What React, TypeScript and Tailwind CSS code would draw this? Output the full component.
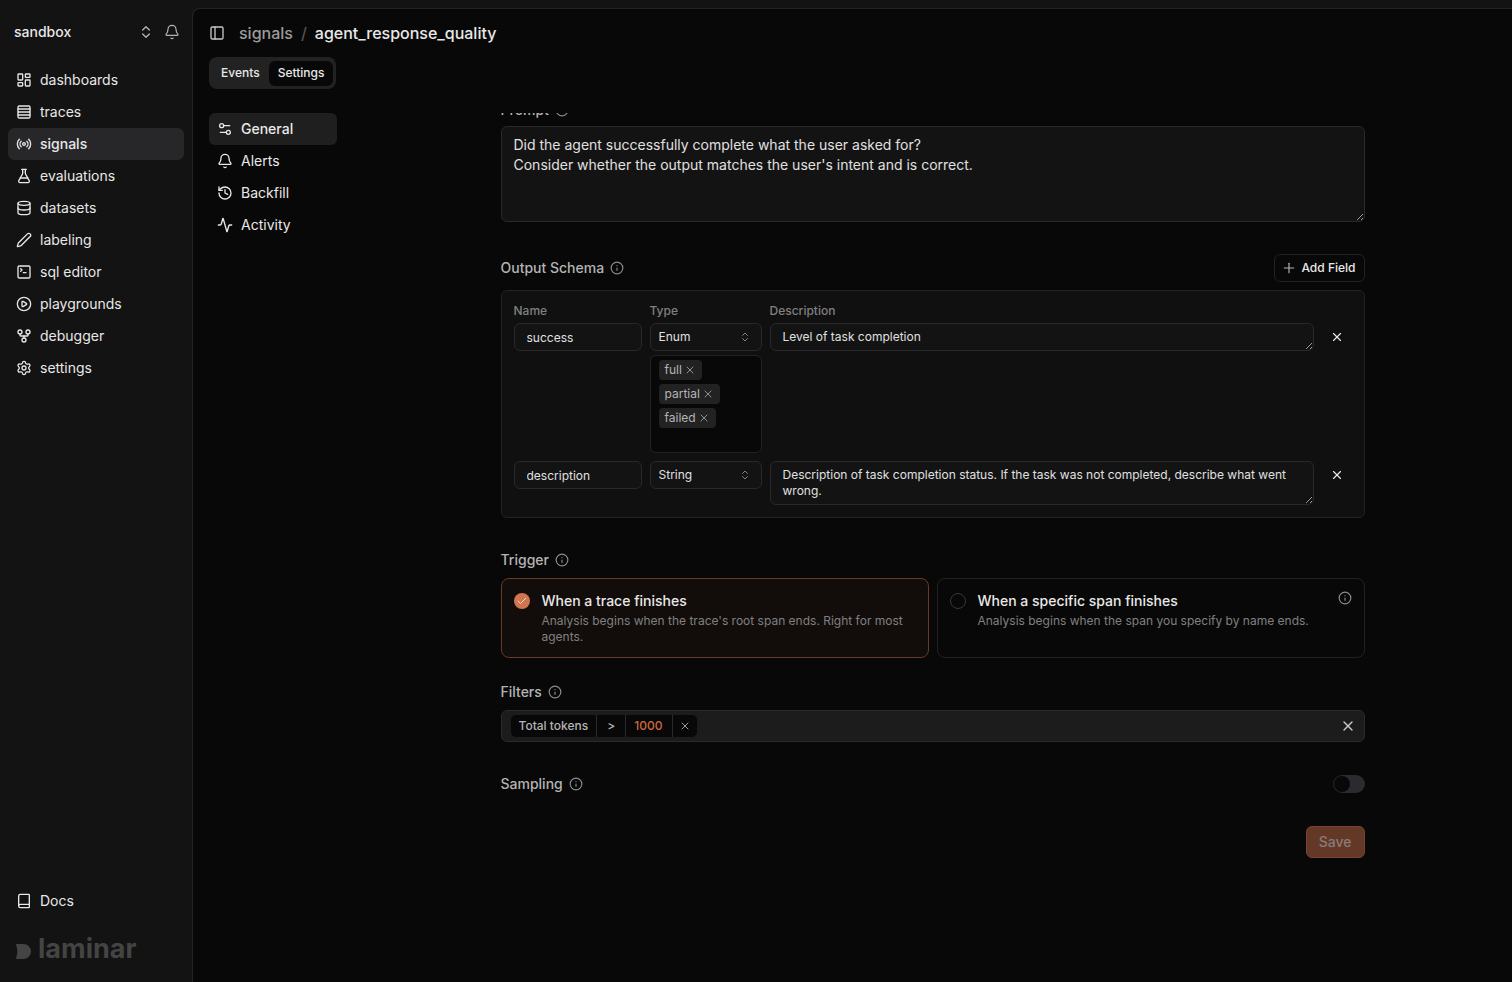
import { useState } from "react";
import {
  Activity,
  Bell,
  Book,
  Check,
  ChevronsUpDown,
  CirclePlay,
  Database,
  FlaskConical,
  GitFork,
  History,
  Info,
  LayoutDashboard,
  PanelLeft,
  Pen,
  Plus,
  Radio,
  Rows4,
  Settings,
  Settings2,
  SquareTerminal,
  X,
} from "lucide-react";
import type { LucideIcon } from "lucide-react";
import clsx from "clsx";

type NavItem = { label: string; icon: LucideIcon };

const mainNav: NavItem[] = [
  { label: "dashboards", icon: LayoutDashboard },
  { label: "traces", icon: Rows4 },
  { label: "signals", icon: Radio },
  { label: "evaluations", icon: FlaskConical },
  { label: "datasets", icon: Database },
  { label: "labeling", icon: Pen },
  { label: "sql editor", icon: SquareTerminal },
  { label: "playgrounds", icon: CirclePlay },
  { label: "debugger", icon: GitFork },
  { label: "settings", icon: Settings },
];

const settingsNav: NavItem[] = [
  { label: "General", icon: Settings2 },
  { label: "Alerts", icon: Bell },
  { label: "Backfill", icon: History },
  { label: "Activity", icon: Activity },
];

const triggers = [
  {
    id: "trace",
    title: "When a trace finishes",
    text: "Analysis begins when the trace's root span ends. Right for most agents.",
    info: false,
  },
  {
    id: "span",
    title: "When a specific span finishes",
    text: "Analysis begins when the span you specify by name ends.",
    info: true,
  },
];

const fieldClass =
  "rounded-md border border-[#29292c] bg-[#131313] text-xs text-[#e0e0e0] outline-none";

function Sidebar() {
  return (
    <aside className="flex w-48 shrink-0 flex-col pb-[17px]">
      <div className="flex h-16 items-center pr-3 pl-3.5">
        <button className="flex flex-1 items-center justify-between text-sm font-medium">
          sandbox
          <ChevronsUpDown className="size-4 text-[#b4b4b4]" />
        </button>
        <button aria-label="Notifications" className="ml-2.5 text-[#b4b4b4]">
          <Bell className="size-4" strokeWidth={1.75} />
        </button>
      </div>
      <nav className="flex flex-col px-2">
        {mainNav.map(({ label, icon: Icon }) => (
          <a
            key={label}
            href={`#${label}`}
            className={clsx(
              "flex h-8 items-center gap-2 rounded-md px-2 text-sm",
              label === "signals" && "bg-[#27272a] font-medium"
            )}
          >
            <Icon className="size-4" />
            {label}
          </a>
        ))}
      </nav>
      <div className="mt-auto flex flex-col px-2">
        <a href="#docs" className="flex h-8 items-center gap-2 px-2 text-sm">
          <Book className="size-4" />
          Docs
        </a>
        <div className="mt-4 flex h-8 items-center gap-[7px] px-2 text-[#444444]">
          <svg viewBox="0 0 15 15" className="mt-1 w-[15px]" fill="currentColor">
            <path d="M1.2 0H7.5a7.5 7.5 0 0 1 0 15H1.2C.4 15-.1 14.3.2 13.5c1.6-4 1.6-8 0-12C-.1.7.4 0 1.2 0Z" />
          </svg>
          <span className="text-[27px] leading-8 font-bold">laminar</span>
        </div>
      </div>
    </aside>
  );
}

function SectionLabel({ children, htmlFor }: { children: string; htmlFor?: string }) {
  return (
    <div className="flex items-center gap-1.5 text-[#b4b4b4]">
      <label htmlFor={htmlFor} className="text-sm font-medium">
        {children}
      </label>
      <Info className="size-3.5 text-[#8c8c8c]" />
    </div>
  );
}

function TypeSelect({ label, value }: { label: string; value: string }) {
  return (
    <div className="relative">
      <select
        aria-label={label}
        defaultValue={value}
        className={clsx(fieldClass, "h-7 w-full appearance-none px-2")}
      >
        <option>String</option>
        <option>Enum</option>
      </select>
      <ChevronsUpDown className="pointer-events-none absolute top-2 right-[11px] size-3 text-[#808080]" />
    </div>
  );
}

function RemoveButton({ label }: { label: string }) {
  return (
    <button aria-label={label} className="flex h-7 items-center justify-center">
      <X className="size-3.5" />
    </button>
  );
}

function OutputSchema() {
  const [tags, setTags] = useState(["full", "partial", "failed"]);

  return (
    <section className="flex flex-col gap-2">
      <div className="flex items-center justify-between">
        <SectionLabel>Output Schema</SectionLabel>
        <button className="flex h-7 items-center gap-1 rounded-md border border-[#222222] pr-2 pl-1.5 text-xs font-medium">
          <Plus className="size-4 text-[#b4b4b4]" strokeWidth={1.75} />
          Add Field
        </button>
      </div>
      <div className="grid grid-cols-[128px_112px_1fr_30px] items-start gap-x-2 rounded-md border border-[#222222] bg-[#101010] p-3">
        <span className="mb-1 text-xs font-medium text-[#808080]">Name</span>
        <span className="mb-1 text-xs font-medium text-[#808080]">Type</span>
        <span className="mb-1 text-xs font-medium text-[#808080]">Description</span>
        <span />

        <input
          aria-label="Field 1 name"
          defaultValue="success"
          className={clsx(fieldClass, "h-7 w-full px-3")}
        />
        <div className="mb-2 flex flex-col gap-1">
          <TypeSelect label="Field 1 type" value="Enum" />
          <div className="flex flex-col items-start gap-1 rounded-md border border-[#222222] bg-[#080808] px-2 py-1">
            {tags.map((tag) => (
              <span
                key={tag}
                className="flex h-5 items-center gap-0.5 rounded-sm bg-[#222222] px-1.5 text-xs text-[#b4b4b4]"
              >
                {tag}
                <button
                  aria-label={`Remove ${tag}`}
                  onClick={() => setTags(tags.filter((t) => t !== tag))}
                >
                  <X className="size-3" strokeWidth={1.5} />
                </button>
              </span>
            ))}
            <input aria-label="Add value" className="h-4 w-full text-xs outline-none" />
          </div>
        </div>
        <textarea
          aria-label="Field 1 description"
          defaultValue="Level of task completion"
          className={clsx(fieldClass, "h-7 w-full overflow-hidden px-3 py-[5px]")}
        />
        <RemoveButton label="Remove field 1" />

        <input
          aria-label="Field 2 name"
          defaultValue="description"
          className={clsx(fieldClass, "h-7 w-full px-3")}
        />
        <TypeSelect label="Field 2 type" value="String" />
        <textarea
          aria-label="Field 2 description"
          defaultValue="Description of task completion status. If the task was not completed, describe what went wrong."
          className={clsx(fieldClass, "h-11 w-full overflow-hidden px-3 py-[5px]")}
        />
        <RemoveButton label="Remove field 2" />
      </div>
    </section>
  );
}

function Trigger() {
  const [selected, setSelected] = useState("trace");

  return (
    <section className="-mb-2 flex flex-col gap-2">
      <SectionLabel>Trigger</SectionLabel>
      <div className="grid grid-cols-2 gap-2">
        {triggers.map(({ id, title, text, info }) => {
          const active = selected === id;
          return (
            <label
              key={id}
              className={clsx(
                "relative flex gap-3 rounded-lg border p-3",
                active ? "border-[#683a28] bg-[#120d0b]" : "border-[#222222]"
              )}
            >
              <input
                type="radio"
                name="trigger"
                checked={active}
                onChange={() => setSelected(id)}
                className="sr-only"
              />
              <span
                className={clsx(
                  "mt-0.5 flex size-4 shrink-0 items-center justify-center rounded-full",
                  active ? "bg-[#d0754e]" : "border border-[#38383b]"
                )}
              >
                {active && <Check className="size-3 text-white" strokeWidth={1.5} />}
              </span>
              <span className="flex flex-col gap-0.5">
                <span className="text-sm font-medium">{title}</span>
                <span className="text-xs text-[#808080]">{text}</span>
              </span>
              {info && <Info className="absolute top-3 right-3 size-3.5 text-[#8c8c8c]" />}
            </label>
          );
        })}
      </div>
    </section>
  );
}

function Filters() {
  return (
    <section className="flex flex-col gap-2">
      <SectionLabel>Filters</SectionLabel>
      <div className="flex h-8 items-center justify-between rounded-md border border-[#2a2a2d] bg-[#1c1c1c] px-2">
        <div className="flex h-6 divide-x divide-[#2a2a2d] overflow-hidden rounded-md border border-[#1c1c1c] bg-[#080808] text-xs font-medium text-[#b4b4b4]">
          <button className="px-2">Total tokens</button>
          <button className="w-[29px]">&gt;</button>
          <input
            aria-label="Total tokens value"
            defaultValue="1000"
            className="w-[47px] px-2 text-[#d0693f] outline-none"
          />
          <button aria-label="Remove filter" className="flex w-6 items-center justify-center">
            <X className="size-3" strokeWidth={1.75} />
          </button>
        </div>
        <button aria-label="Clear filters" className="text-[#c8c8c8]">
          <X className="size-4" />
        </button>
      </div>
    </section>
  );
}

function Sampling() {
  const [enabled, setEnabled] = useState(false);

  return (
    <section className="flex items-center justify-between">
      <SectionLabel htmlFor="sampling">Sampling</SectionLabel>
      <label className="flex h-[18px] w-8 items-center rounded-full bg-[#2a2a2f] p-px">
        <input
          id="sampling"
          type="checkbox"
          role="switch"
          checked={enabled}
          onChange={(e) => setEnabled(e.target.checked)}
          className="peer sr-only"
        />
        <span className="size-4 rounded-full bg-[#080808] peer-checked:ml-auto" />
      </label>
    </section>
  );
}

function App() {
  return (
    <div className="flex h-screen bg-[#131313] font-['Inter',sans-serif] text-[#e8e8e8] [color-scheme:dark]">
      <Sidebar />
      <main className="mt-2 flex min-w-0 flex-1 flex-col rounded-tl-lg border-t border-l border-[#242424] bg-[#080808]">
        <header className="flex h-12 items-center gap-3.5 px-4 font-medium">
          <button aria-label="Toggle sidebar" className="text-[#c8c8c8]">
            <PanelLeft className="size-4" />
          </button>
          <div className="flex gap-2">
            <a href="#signals" className="text-[#9c9c9c]">
              signals
            </a>
            <span className="text-[#555555]">/</span>
            <h1>agent_response_quality</h1>
          </div>
        </header>
        <div className="px-4">
          <div className="inline-flex h-8 items-center rounded-lg bg-[#222222] p-[3px] align-top text-xs font-medium">
            <button className="h-full px-[9px]">Events</button>
            <button className="h-[25px] rounded-md bg-[#080808] px-[9px]">Settings</button>
          </div>
        </div>
        <div className="flex min-h-0 flex-1 gap-4 pt-6 pl-4">
          <nav className="flex w-32 shrink-0 flex-col">
            {settingsNav.map(({ label, icon: Icon }) => (
              <a
                key={label}
                href={`#${label}`}
                className={clsx(
                  "flex h-8 items-center gap-2 rounded-md px-2 text-sm",
                  label === "General" && "bg-[#1f1f1f] font-medium"
                )}
              >
                <Icon className="size-4" />
                {label}
              </a>
            ))}
          </nav>
          <div className="min-w-0 flex-1 overflow-hidden">
            <form
              onSubmit={(e) => e.preventDefault()}
              className="mx-auto -mt-[13px] flex max-w-4xl flex-col gap-8 px-4"
            >
              <section className="flex flex-col gap-1.5">
                <SectionLabel htmlFor="prompt">Prompt</SectionLabel>
                <textarea
                  id="prompt"
                  defaultValue={
                    "Did the agent successfully complete what the user asked for?\nConsider whether the output matches the user's intent and is correct."
                  }
                  className="h-24 w-full rounded-md border border-[#29292c] bg-[#131313] px-3 py-2 text-sm text-[#e0e0e0] outline-none"
                />
              </section>
              <OutputSchema />
              <Trigger />
              <Filters />
              <Sampling />
              <button
                disabled
                className="h-8 self-end rounded-md border border-[#75452f] bg-[#643826] px-3 text-sm font-medium text-[#887c77]"
              >
                Save
              </button>
            </form>
          </div>
        </div>
      </main>
    </div>
  );
}

export default App;
